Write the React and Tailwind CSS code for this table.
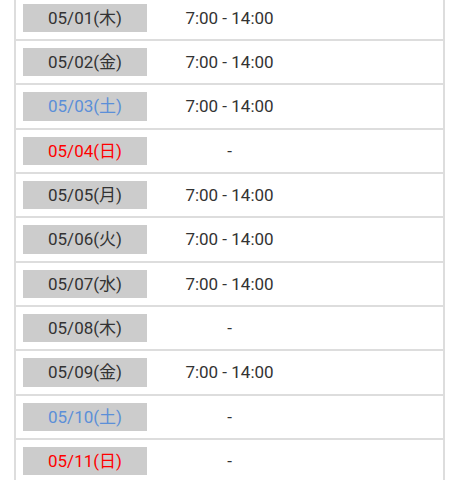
const rows = [
  { d: "05/01(木)", t: "7:00 - 14:00", c: "n" },
  { d: "05/02(金)", t: "7:00 - 14:00", c: "n" },
  { d: "05/03(土)", t: "7:00 - 14:00", c: "b" },
  { d: "05/04(日)", t: "-", c: "r" },
  { d: "05/05(月)", t: "7:00 - 14:00", c: "n" },
  { d: "05/06(火)", t: "7:00 - 14:00", c: "n" },
  { d: "05/07(水)", t: "7:00 - 14:00", c: "n" },
  { d: "05/08(木)", t: "-", c: "n" },
  { d: "05/09(金)", t: "7:00 - 14:00", c: "n" },
  { d: "05/10(土)", t: "-", c: "b" },
  { d: "05/11(日)", t: "-", c: "r" },
];

export default function App() {
  return (
    <div className="w-[459px] h-[480px] overflow-hidden bg-white" style={{ fontFamily: 'Roboto, "Noto Sans CJK JP", sans-serif' }}>
      <div className="ml-[14px] w-[431px] -mt-[3.33px] border-x-2 border-[#dddddd]">
        {rows.map((r, i) => (
          <div key={i} className="flex items-center h-[44.33px] border-b-2 border-[#dddddd]">
            <div
              className={
                "ml-[7px] w-[124px] h-[28.33px] pt-[1px] bg-[#cccccc] flex items-center justify-center text-[17px] " +
                (r.c === "r" ? "text-[#ff0000]" : r.c === "b" ? "text-[#5b8fd8]" : "text-[#333333]")
              }
            >
              {r.d}
            </div>
            <div className="w-[165px] pt-[1px] text-center text-[17px] text-[#333333]">{r.t}</div>
          </div>
        ))}
      </div>
    </div>
  );
}
